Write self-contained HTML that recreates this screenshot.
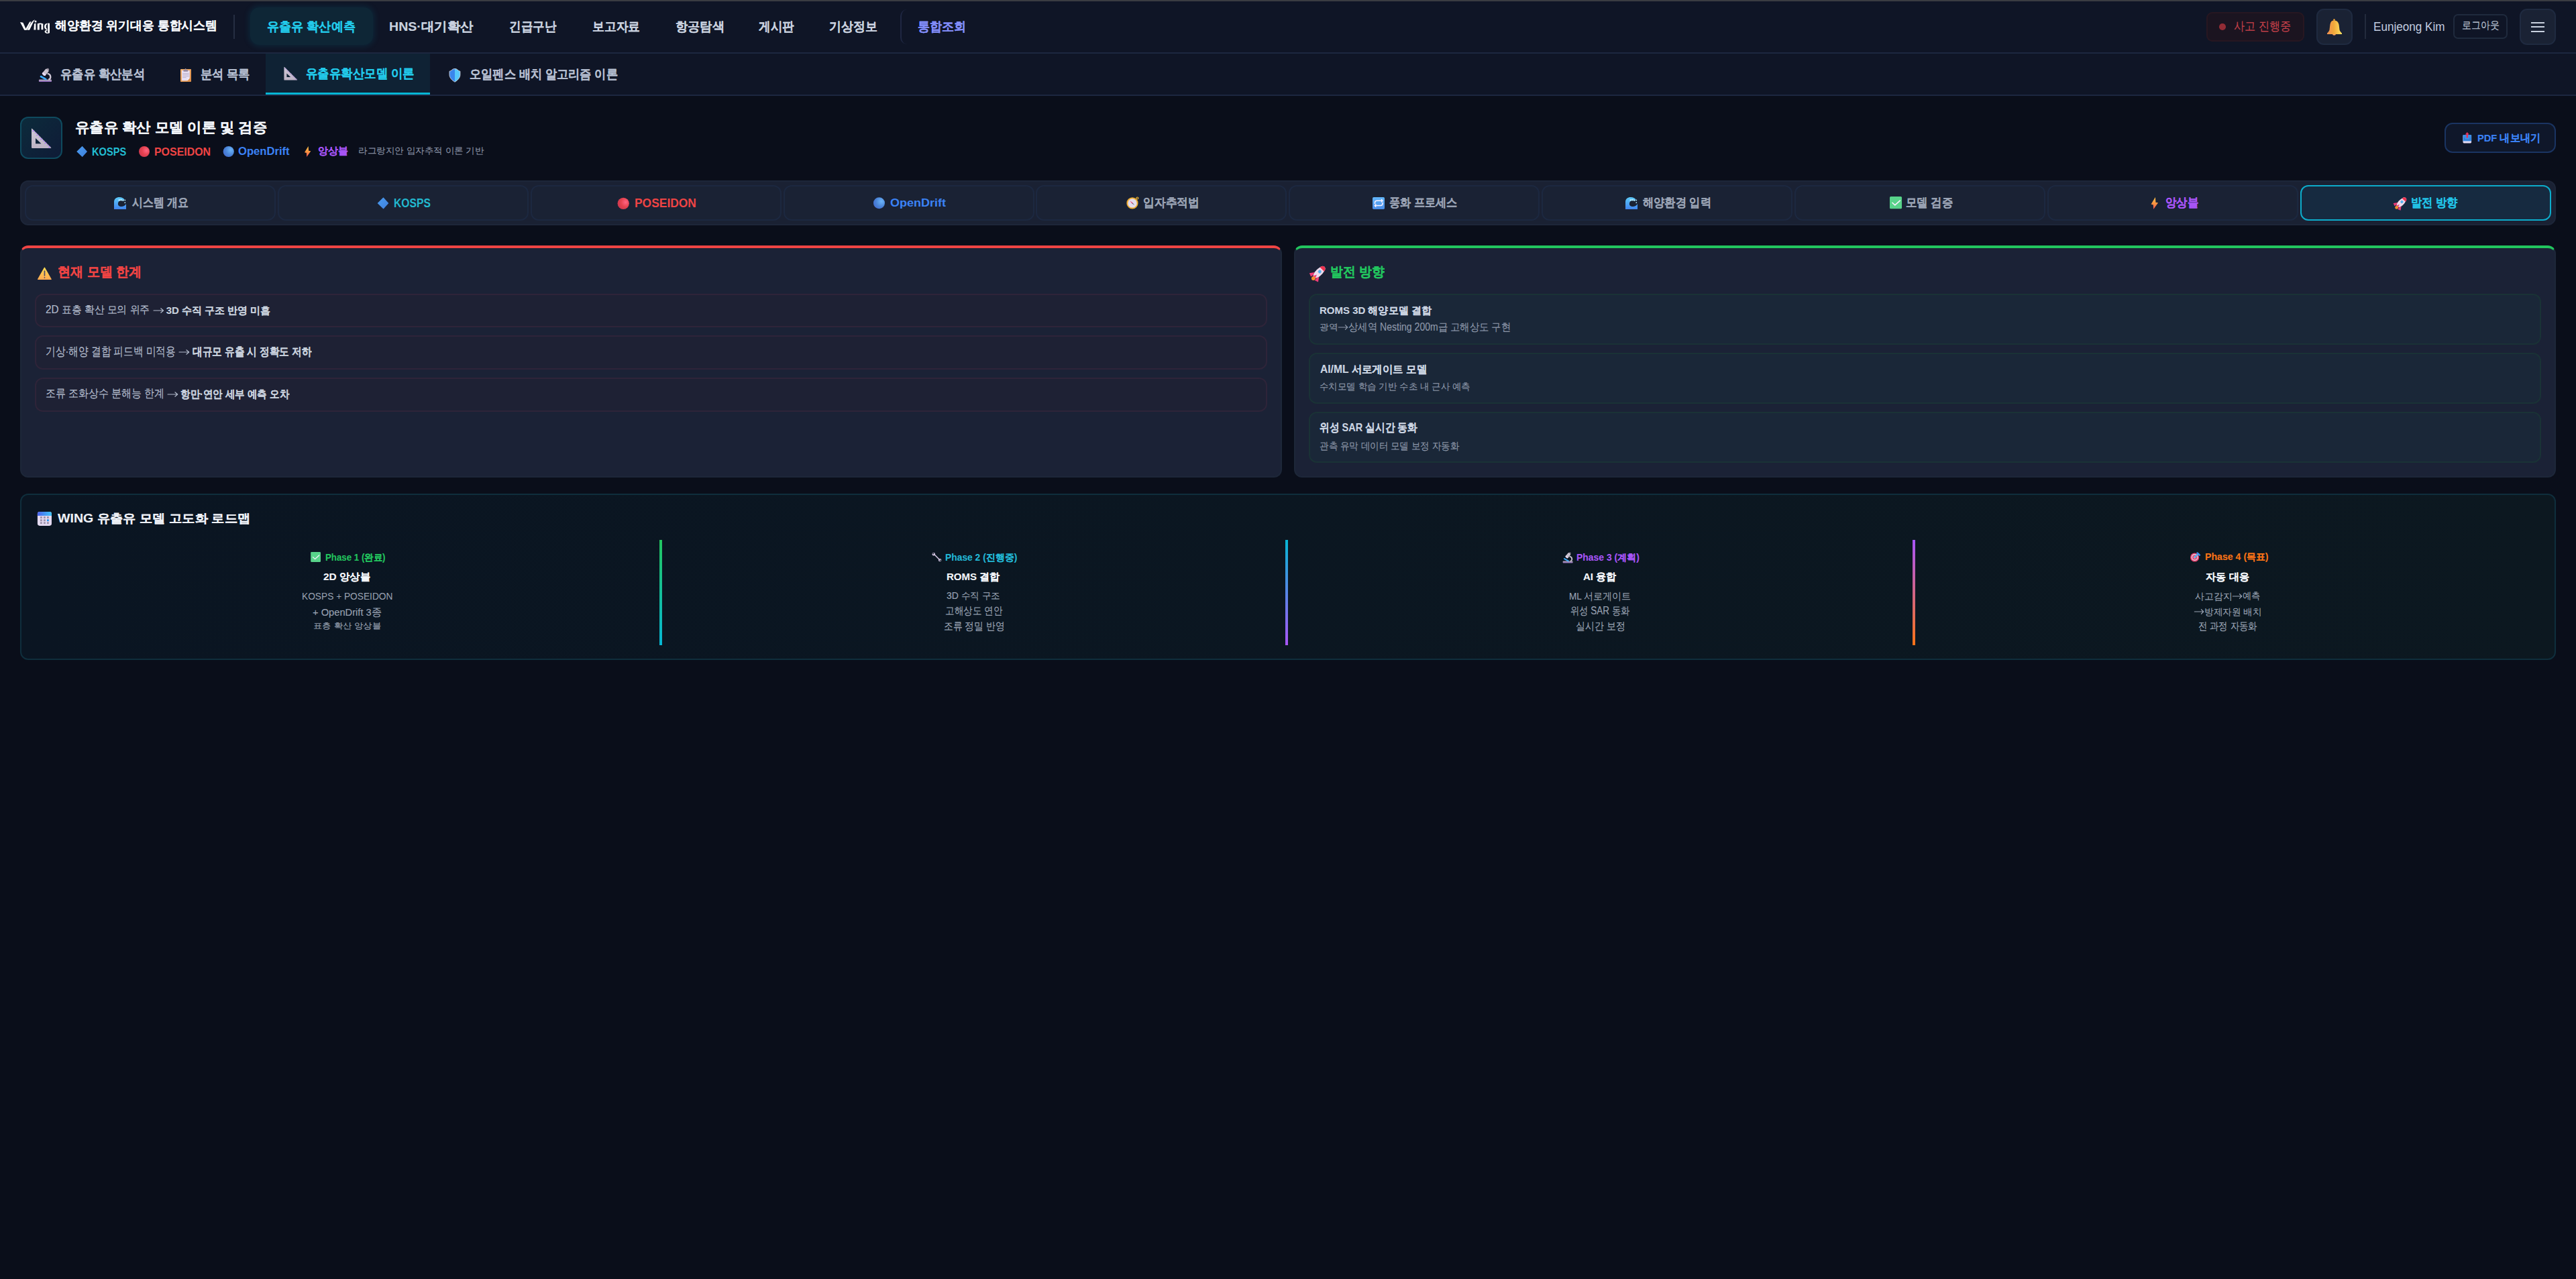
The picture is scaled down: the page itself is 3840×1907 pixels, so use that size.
<!DOCTYPE html><html lang="ko"><head><meta charset="utf-8"><style>*{box-sizing:border-box;margin:0;padding:0}html,body{width:3840px;height:1907px;overflow:hidden;background:#0a0e1a;font-family:"Liberation Sans",sans-serif}div{position:absolute}span{position:absolute;line-height:1;white-space:pre;transform-origin:0 0}</style></head><body>
<div style="left:0px;top:0px;width:3840px;height:80px;background:#0f1526"></div>
<div style="left:0px;top:0px;width:3840px;height:1.5px;background:#3a3c42"></div>
<div style="left:0px;top:78px;width:3840px;height:2px;background:#1c2740"></div>
<div style="left:348px;top:22px;width:2px;height:36px;background:#262e42"></div>
<div style="left:373px;top:11px;width:183px;height:56px;border-radius:14px;background:#0e2636;box-shadow:0 0 8px 2px rgba(8,120,150,0.18)"></div>
<div style="left:1342px;top:14px;width:40px;height:52px;border-left:2px solid #1f2742;border-radius:10px 0 0 10px"></div>
<div style="left:3289px;top:18px;width:146px;height:44px;border-radius:9px;background:#1b1420;border:2px solid #33192180"></div>
<div style="left:3308px;top:35px;width:9.5px;height:9.5px;border-radius:50%;background:#922c35"></div>
<div style="left:3453px;top:13px;width:54px;height:54px;border-radius:11px;background:#1a2234;border:2px solid #1f2a40"></div>
<div style="left:3525px;top:21px;width:2px;height:37px;background:#232b3d"></div>
<div style="left:3657px;top:21px;width:81px;height:37px;border-radius:7px;border:2px solid #1f2a3d"></div>
<div style="left:3756px;top:13px;width:54px;height:54px;border-radius:11px;background:#1a2234;border:2px solid #1f2a40"></div>
<div style="left:3773px;top:32.5px;width:20px;height:2px;background:#c9d1df"></div>
<div style="left:3773px;top:39px;width:20px;height:2px;background:#c9d1df"></div>
<div style="left:3773px;top:45.5px;width:20px;height:2px;background:#c9d1df"></div>
<div style="left:0px;top:80px;width:3840px;height:61px;background:#0f1526"></div>
<div style="left:0px;top:141px;width:3840px;height:2px;background:#1c2740"></div>
<div style="left:396px;top:80px;width:245px;height:61px;background:#0f2234"></div>
<div style="left:396px;top:137.5px;width:245px;height:3.5px;background:#06b6d4"></div>
<div style="left:30px;top:174px;width:63px;height:63px;border-radius:12px;border:2px solid #0f4a5e;background:linear-gradient(135deg,#0c2b3b,#0f1b37)"></div>
<div style="left:3644px;top:183px;width:166px;height:45px;border-radius:12px;border:2px solid #1a3462;background:#0f172a"></div>
<div style="left:30px;top:269px;width:3780px;height:67px;border-radius:12px;background:#1a2133;border:2px solid #1d2639"></div>
<div style="left:37.0px;top:276px;width:374px;height:53px;border-radius:12px;background:#1a2234;border:2px solid #1c2840"></div>
<div style="left:413.87px;top:276px;width:374px;height:53px;border-radius:12px;background:#1a2234;border:2px solid #1c2840"></div>
<div style="left:790.74px;top:276px;width:374px;height:53px;border-radius:12px;background:#1a2234;border:2px solid #1c2840"></div>
<div style="left:1167.6100000000001px;top:276px;width:374px;height:53px;border-radius:12px;background:#1a2234;border:2px solid #1c2840"></div>
<div style="left:1544.48px;top:276px;width:374px;height:53px;border-radius:12px;background:#1a2234;border:2px solid #1c2840"></div>
<div style="left:1921.35px;top:276px;width:374px;height:53px;border-radius:12px;background:#1a2234;border:2px solid #1c2840"></div>
<div style="left:2298.2200000000003px;top:276px;width:374px;height:53px;border-radius:12px;background:#1a2234;border:2px solid #1c2840"></div>
<div style="left:2675.09px;top:276px;width:374px;height:53px;border-radius:12px;background:#1a2234;border:2px solid #1c2840"></div>
<div style="left:3051.96px;top:276px;width:374px;height:53px;border-radius:12px;background:#1a2234;border:2px solid #1c2840"></div>
<div style="left:3429px;top:276px;width:374px;height:53px;border-radius:12px;background:#162a40;border:2px solid #0daccb"></div>
<div style="left:30px;top:366px;width:1880.5px;height:346px;border-radius:12px;background:#1b2236;border:2px solid #1d2739;border-top:4px solid #ef4444"></div>
<div style="left:1929px;top:366px;width:1881px;height:346px;border-radius:12px;background:#1b2236;border:2px solid #1d2739;border-top:4px solid #22c55e"></div>
<div style="left:52px;top:438px;width:1836.5px;height:50px;border-radius:12px;background:#1e2134;border:2px solid #2e2439"></div>
<div style="left:52px;top:500px;width:1836.5px;height:50.5px;border-radius:12px;background:#1e2134;border:2px solid #2e2439"></div>
<div style="left:52px;top:563px;width:1836.5px;height:50.5px;border-radius:12px;background:#1e2134;border:2px solid #2e2439"></div>
<div style="left:1951px;top:437.75px;width:1837px;height:76px;border-radius:12px;background:#1a2738;border:2px solid #1a3236"></div>
<div style="left:1951px;top:525.6px;width:1837px;height:76px;border-radius:12px;background:#1a2738;border:2px solid #1a3236"></div>
<div style="left:1951px;top:613.8px;width:1837px;height:76px;border-radius:12px;background:#1a2738;border:2px solid #1a3236"></div>
<div style="left:30px;top:736px;width:3780px;height:248px;border-radius:12px;border:2px solid #0f2e3c;background:linear-gradient(90deg,#0a1522,#0c1820)"></div>
<div style="left:982.5px;top:805px;width:4px;height:157px;background:linear-gradient(#22c55e,#06b6d4)"></div>
<div style="left:1916px;top:805px;width:4px;height:157px;background:linear-gradient(#06b6d4,#a855f7)"></div>
<div style="left:2851px;top:805px;width:4px;height:157px;background:linear-gradient(#a855f7,#f97316)"></div>
<svg style="position:absolute;left:26px;top:24px" width="56" height="32" viewBox="0 0 56 32"><g fill="#ffffff"><path d="M4,9 L8.4,9.8 L13.3,20.8 L10.2,20.8 Z"/><path d="M11.2,20.8 L18.2,8.6 L20.6,8.3 L14.2,20.8 Z"/><path d="M14.6,20.8 C17.5,15 20.5,7.5 26.2,5.2 C25.2,6.4 24.6,7.4 23.9,8.6 L18,20.8 Z"/><circle cx="27" cy="8.1" r="1.5"/><path d="M25,11.6 L27.4,10.6 L27.4,20.6 L24.4,20.6 Z"/><path d="M29.8,20.6 L29.8,11.2 Q34,9.6 38.3,11.4 L38.3,20.3 L35.5,20.3 L35.5,12.6 Q34,12 32.8,12.5 L32.8,20.6 Z"/><path d="M44.4,10.8 Q40,11.2 40,15.8 Q40,20 44.4,20.4 L44.4,19.2 Q42.6,18.6 42.6,15.8 Q42.6,12.6 44.4,12 Z"/><path d="M45.2,10.4 L48,10.8 L48,24.8 Q47.6,26 45.4,25.9 Z"/><path d="M43.8,20.6 Q40.2,21.4 40.6,23.6 Q41.4,26 45.2,25.9 L45.2,24.8 Q43.2,24.4 43,23.2 Q43,21.9 44.9,21.2 Z"/></g></svg>
<svg style="position:absolute;left:3464px;top:24px" width="32.0" height="32.0" viewBox="0 0 32 32"><defs><linearGradient id="bel" x1="0" y1="0" x2="1" y2="0"><stop offset="0" stop-color="#f08e52"/><stop offset="0.45" stop-color="#f0a83a"/><stop offset="1" stop-color="#ffe462"/></linearGradient></defs><circle cx="15.5" cy="5.6" r="1.3" fill="#f2a83a"/><path d="M13,26.8 A2.5,2 0 0 0 18,26.8 Z" fill="#f7a070"/><path d="M15.5,6.4 C19.6,6.4 22,9 22.6,13 L23.5,20.5 C24,22.6 25.6,24.1 27,25.6 L27,26.9 L5,26.9 L5,25.6 C6.4,24.1 8,22.6 8.5,20.5 L9.4,13 C10,9 11.4,6.4 15.5,6.4 Z" fill="url(#bel)"/></svg>
<svg style="position:absolute;left:52px;top:96px" width="32" height="32" viewBox="0 0 32 32"><rect x="5.9" y="22.4" width="19.1" height="3.5" rx="1.3" fill="#a999b7"/><rect x="6.2" y="24.9" width="18.5" height="1" fill="#8e62c2"/>
<path d="M18.6,13.6 Q23.6,14.6 23.3,19.4 Q23.1,22 20.3,22.6" fill="none" stroke="#d2cad8" stroke-width="2.3"/>
<line x1="8.9" y1="18" x2="16.3" y2="22.2" stroke="#3ba9f8" stroke-width="2.6" stroke-linecap="round"/>
<g transform="rotate(40 15.8 11.6)"><rect x="13" y="6.2" width="5.8" height="11" rx="2.2" fill="#c9c2cf"/><rect x="13" y="14.2" width="5.8" height="2.2" fill="#eadcf8"/><rect x="14.3" y="4.6" width="3.2" height="2.4" rx="1" fill="#9c92a2"/></g></svg>
<svg style="position:absolute;left:261px;top:96px" width="32.0" height="32.0" viewBox="0 0 32 32"><defs><linearGradient id="clg" x1="0" y1="0" x2="1" y2="1"><stop offset="0" stop-color="#f4b26e"/><stop offset="1" stop-color="#d98a46"/></linearGradient></defs><rect x="8" y="7" width="16" height="19" rx="0.8" fill="url(#clg)"/><path d="M10,9 L21.8,9 L21.8,20.5 L18.3,24.2 L10,24.2 Z" fill="#e6def2"/><path d="M18.3,24.2 L21.8,20.5 L18.6,20.8 Z" fill="#f2eefa"/><rect x="12.3" y="8" width="7" height="2.8" rx="1" fill="#988aa0"/><circle cx="15.6" cy="7" r="0.9" fill="#988aa0"/><g fill="#b9afc8"><rect x="11.2" y="13" width="9.5" height="0.9"/><rect x="11.2" y="15" width="9.5" height="0.9"/><rect x="11.2" y="17" width="9.5" height="0.9"/><rect x="11.2" y="19" width="5.5" height="0.9"/></g></svg>
<svg style="position:absolute;left:412.3px;top:88.4px" width="43" height="43" viewBox="0 0 64 64"><defs><linearGradient id="ssg" x1="0" y1="0" x2="0" y2="1"><stop offset="0" stop-color="#cfc9d6"/><stop offset="1" stop-color="#bdb4c5"/></linearGradient></defs>
<path fill="url(#ssg)" fill-rule="evenodd" d="M17,18.3 Q17,16.9 18,17.9 L46,45.9 Q47,47 45.6,47 L18.3,47 Q17,47 17,45.7 Z M23,32 L23,40.3 L31.5,40.3 Z"/>
<g stroke="#a36ff2" stroke-width="1.3" stroke-linecap="round">
<path d="M20.3,20.5 L18.9,21.9"/><path d="M23.2,23.6 L22.4,24.4"/><path d="M26.3,26.5 L24.9,27.9"/><path d="M29.2,29.6 L28.4,30.4"/><path d="M32.3,32.5 L30.9,33.9"/><path d="M35.2,35.6 L34.4,36.4"/><path d="M38.3,38.5 L36.9,39.9"/><path d="M41.2,41.6 L40.4,42.4"/><path d="M44.3,44.5 L42.9,45.9"/></g></svg>
<svg style="position:absolute;left:640px;top:90px" width="80" height="40" viewBox="0 0 80 40"><path fill="#3a86ec" d="M30,16.3 C32,15.8 34,14.2 35,13.2 C36.5,12.4 37.2,12.2 38,12.2 L38,32.2 C34,30 30,26 30,21.5 Z"/><path fill="#56c7fb" d="M38,12.2 C38.8,12.2 39.5,12.4 41,13.2 C42,14.2 44,15.8 45.9,16.3 L45.9,21.5 C45.9,26 42,30 38,32.2 Z"/><path fill="none" stroke="#cfd3de" stroke-width="0.9" d="M30,16.3 C32,15.8 34,14.2 35,13.2 C36.5,12.4 39.5,12.4 41,13.2 C42,14.2 44,15.8 45.9,16.3 L45.9,21.5 C45.9,26 42,30 38,32.2 C34,30 30,26 30,21.5 Z"/></svg>
<svg style="position:absolute;left:30px;top:174px" width="64" height="64" viewBox="0 0 64 64"><defs><linearGradient id="ssg" x1="0" y1="0" x2="0" y2="1"><stop offset="0" stop-color="#cfc9d6"/><stop offset="1" stop-color="#bdb4c5"/></linearGradient></defs>
<path fill="url(#ssg)" fill-rule="evenodd" d="M17,18.3 Q17,16.9 18,17.9 L46,45.9 Q47,47 45.6,47 L18.3,47 Q17,47 17,45.7 Z M23,32 L23,40.3 L31.5,40.3 Z"/>
<g stroke="#a36ff2" stroke-width="1.3" stroke-linecap="round">
<path d="M20.3,20.5 L18.9,21.9"/><path d="M23.2,23.6 L22.4,24.4"/><path d="M26.3,26.5 L24.9,27.9"/><path d="M29.2,29.6 L28.4,30.4"/><path d="M32.3,32.5 L30.9,33.9"/><path d="M35.2,35.6 L34.4,36.4"/><path d="M38.3,38.5 L36.9,39.9"/><path d="M41.2,41.6 L40.4,42.4"/><path d="M44.3,44.5 L42.9,45.9"/></g></svg>
<svg style="position:absolute;left:108px;top:210px" width="32.0" height="32.0" viewBox="0 0 32 32"><defs><linearGradient id="dmg" x1="0" y1="0" x2="1" y2="1"><stop offset="0" stop-color="#4a9cf0"/><stop offset="1" stop-color="#3f7fdc"/></linearGradient></defs><path d="M14.4,8.1 Q14.7,7.9 15,8.2 L21.8,15.7 Q22,16 21.8,16.3 L15,23.8 Q14.7,24.1 14.4,23.8 L6.5,16.3 Q6.2,16 6.5,15.7 Z" fill="url(#dmg)"/></svg>
<svg style="position:absolute;left:200px;top:210px" width="32.0" height="32.0" viewBox="0 0 32 32"><defs><radialGradient id="rdg" cx="0.7" cy="0.4" r="0.8"><stop offset="0" stop-color="#ff6482"/><stop offset="0.5" stop-color="#e5424f"/><stop offset="1" stop-color="#c9354f"/></radialGradient></defs><circle cx="15" cy="16" r="8" fill="url(#rdg)"/></svg>
<svg style="position:absolute;left:326px;top:210px" width="32.0" height="32.0" viewBox="0 0 32 32"><defs><radialGradient id="blg" cx="0.7" cy="0.35" r="0.85"><stop offset="0" stop-color="#6cb4f8"/><stop offset="0.55" stop-color="#4a84d8"/><stop offset="1" stop-color="#4468d0"/></radialGradient></defs><circle cx="14.75" cy="16" r="8.1" fill="url(#blg)"/></svg>
<svg style="position:absolute;left:442px;top:210px" width="32.0" height="32.0" viewBox="0 0 32 32"><defs><linearGradient id="btg" x1="0" y1="0" x2="0" y2="1"><stop offset="0" stop-color="#ffc548"/><stop offset="0.55" stop-color="#f89040"/><stop offset="1" stop-color="#f04e5a"/></linearGradient></defs><path d="M17.6,8 L12,17.3 L14.9,18.1 L15.2,24 L21.3,15.3 L18.1,14.8 Z" fill="url(#btg)"/></svg>
<svg style="position:absolute;left:3670px;top:196px" width="16" height="18" viewBox="0 0 16 18"><rect x="1.5" y="5" width="12.6" height="12.4" rx="1.4" fill="#e6daf2"/><rect x="1.5" y="5" width="12.6" height="9.6" rx="1.2" fill="#3a8ee6"/><path d="M3.6,9.2 L3.6,12.6 L12,12.6 L12,9.2" fill="none" stroke="#2b70c8" stroke-width="0.9"/><path d="M7.8,1 L10.8,4.4 L9,4.4 L9,9.4 L6.6,9.4 L6.6,4.4 L4.8,4.4 Z" fill="#e5345c"/></svg>
<svg style="position:absolute;left:163px;top:287px" width="32" height="32" viewBox="0 0 32 32"><defs><linearGradient id="wvg" x1="0" y1="0" x2="0" y2="1"><stop offset="0" stop-color="#5ccaf9"/><stop offset="1" stop-color="#4185ee"/></linearGradient></defs><path d="M7,25 L7,14 C7,9.3 10.6,6.9 15,6.9 C18.6,6.9 21,8.2 22.5,10.3 L21.2,12 C20.2,11.6 19,11.5 18,11.5 C15,11.5 12.9,14 12.9,17 C12.9,19.6 15.3,21.1 18,21.1 C21,21.1 23.4,19.6 25,17 L25,25 Z" fill="url(#wvg)"/><g fill="#aee8ff"><circle cx="14.8" cy="11.4" r="1.4"/><circle cx="17.6" cy="11.2" r="1.4"/><circle cx="20.4" cy="11.7" r="1.2"/><circle cx="23.3" cy="11.5" r="0.9"/><circle cx="23.3" cy="15.2" r="0.9"/></g></svg>
<svg style="position:absolute;left:556px;top:285.5px" width="33.92" height="33.92" viewBox="0 0 32 32"><defs><linearGradient id="dmg" x1="0" y1="0" x2="1" y2="1"><stop offset="0" stop-color="#4a9cf0"/><stop offset="1" stop-color="#3f7fdc"/></linearGradient></defs><path d="M14.4,8.1 Q14.7,7.9 15,8.2 L21.8,15.7 Q22,16 21.8,16.3 L15,23.8 Q14.7,24.1 14.4,23.8 L6.5,16.3 Q6.2,16 6.5,15.7 Z" fill="url(#dmg)"/></svg>
<svg style="position:absolute;left:913.45px;top:285.7px" width="34.56" height="34.56" viewBox="0 0 32 32"><defs><radialGradient id="rdg" cx="0.7" cy="0.4" r="0.8"><stop offset="0" stop-color="#ff6482"/><stop offset="0.5" stop-color="#e5424f"/><stop offset="1" stop-color="#c9354f"/></radialGradient></defs><circle cx="15" cy="16" r="8" fill="url(#rdg)"/></svg>
<svg style="position:absolute;left:1295.0px;top:286.2px" width="33.6" height="33.6" viewBox="0 0 32 32"><defs><radialGradient id="blg" cx="0.7" cy="0.35" r="0.85"><stop offset="0" stop-color="#6cb4f8"/><stop offset="0.55" stop-color="#4a84d8"/><stop offset="1" stop-color="#4468d0"/></radialGradient></defs><circle cx="14.75" cy="16" r="8.1" fill="url(#blg)"/></svg>
<svg style="position:absolute;left:1672px;top:287px" width="32" height="32" viewBox="0 0 32 32"><circle cx="16" cy="15.9" r="8.6" fill="#efad32"/><circle cx="16" cy="15.9" r="6.7" fill="#e3dcee"/><circle cx="23.4" cy="8.5" r="1.5" fill="none" stroke="#f2b630" stroke-width="1.2"/><path d="M12.3,12.2 L16.6,15.4 L15.4,16.6 Z" fill="#e8356a"/><path d="M16.6,15.4 L19.3,18.9 L15.4,16.6 Z" fill="#6e6a74"/></svg>
<svg style="position:absolute;left:2039px;top:287px" width="32" height="32" viewBox="0 0 32 32"><defs><linearGradient id="rpg" x1="0" y1="0" x2="0" y2="1"><stop offset="0" stop-color="#62b6fa"/><stop offset="1" stop-color="#4a8ce6"/></linearGradient></defs><rect x="7" y="7" width="18" height="18" rx="1.8" fill="url(#rpg)"/><g fill="none" stroke="#fbf2ff" stroke-width="1.5" stroke-linecap="round" stroke-linejoin="round"><path d="M10.5,16.6 L10.5,15.2 Q10.5,12.3 13.6,12.3 L21.6,12.3"/><path d="M20.4,10.6 L22,12.3 L20.4,14"/><path d="M21.9,15.6 L21.9,16.8 Q21.9,19.6 18.8,19.6 L10.6,19.6"/><path d="M11.9,17.9 L10.3,19.6 L11.9,21.3"/></g></svg>
<svg style="position:absolute;left:2415.6px;top:287px" width="32" height="32" viewBox="0 0 32 32"><defs><linearGradient id="wvg" x1="0" y1="0" x2="0" y2="1"><stop offset="0" stop-color="#5ccaf9"/><stop offset="1" stop-color="#4185ee"/></linearGradient></defs><path d="M7,25 L7,14 C7,9.3 10.6,6.9 15,6.9 C18.6,6.9 21,8.2 22.5,10.3 L21.2,12 C20.2,11.6 19,11.5 18,11.5 C15,11.5 12.9,14 12.9,17 C12.9,19.6 15.3,21.1 18,21.1 C21,21.1 23.4,19.6 25,17 L25,25 Z" fill="url(#wvg)"/><g fill="#aee8ff"><circle cx="14.8" cy="11.4" r="1.4"/><circle cx="17.6" cy="11.2" r="1.4"/><circle cx="20.4" cy="11.7" r="1.2"/><circle cx="23.3" cy="11.5" r="0.9"/><circle cx="23.3" cy="15.2" r="0.9"/></g></svg>
<svg style="position:absolute;left:2806.7px;top:282px" width="39.04" height="39.04" viewBox="0 0 32 32"><rect x="8.2" y="9" width="14.8" height="15" rx="1.3" fill="#58d38a"/><path d="M11.4,16.6 L14.6,19.6 L20.7,14" fill="none" stroke="#faf2ff" stroke-width="1.25" stroke-linecap="round" stroke-linejoin="round"/></svg>
<svg style="position:absolute;left:3193.4px;top:284.6px" width="36.16" height="36.16" viewBox="0 0 32 32"><defs><linearGradient id="btg" x1="0" y1="0" x2="0" y2="1"><stop offset="0" stop-color="#ffc548"/><stop offset="0.55" stop-color="#f89040"/><stop offset="1" stop-color="#f04e5a"/></linearGradient></defs><path d="M17.6,8 L12,17.3 L14.9,18.1 L15.2,24 L21.3,15.3 L18.1,14.8 Z" fill="url(#btg)"/></svg>
<svg style="position:absolute;left:3562px;top:287px" width="32" height="32" viewBox="0 0 32 32"><g transform="rotate(-45 18 14.5)"><path d="M8,14.5 C9.5,10.6 14.5,10 19.5,10.3 L24.4,11.3 C27.8,12.3 27.8,16.7 24.4,17.7 L19.5,18.7 C14.5,19 9.5,18.4 8,14.5 Z" fill="#eedced"/><path d="M22.6,10.8 L24.4,11.3 C27.8,12.3 27.8,16.7 24.4,17.7 L22.6,18.2 Z" fill="#ee3350"/><circle cx="18.6" cy="14.5" r="2.1" fill="#4ab3f7" stroke="#c9b6cf" stroke-width="0.5"/><path d="M13.5,10.6 L8.2,6.8 L6.6,11.2 L10.4,11.6 Z" fill="#f03c78"/><path d="M13.5,18.4 L8.2,22.2 L6.6,17.8 L10.4,17.4 Z" fill="#f03c78"/><path d="M8.4,12 L13.5,14.5 L8.4,17 Z" fill="#f04a80"/></g><circle cx="10.6" cy="22.4" r="2.4" fill="#f88e2a"/></svg>
<svg style="position:absolute;left:50px;top:392px" width="32.0" height="32.0" viewBox="0 0 32 32"><defs><linearGradient id="wng" x1="0" y1="0" x2="0" y2="1"><stop offset="0" stop-color="#ffdf52"/><stop offset="1" stop-color="#ffa852"/></linearGradient></defs><path d="M15.8,7 Q16.4,6 17,7 L26.7,24 Q27.2,24.9 26.2,24.9 L6.6,24.9 Q5.6,24.9 6.1,24 Z" fill="url(#wng)"/><rect x="15.6" y="11.3" width="1.7" height="8.4" rx="0.85" fill="#4e4c6a"/><circle cx="16.45" cy="22" r="0.9" fill="#4e4c6a"/></svg>
<svg style="position:absolute;left:227px;top:457.9px" width="17.75" height="10" viewBox="0 0 17.75 10"><path d="M2,5 L16.55,5 M12.75,1.8 L16.55,5 L12.75,8.2" fill="none" stroke="#b3bccd" stroke-width="1.15" stroke-linecap="round" stroke-linejoin="round"/></svg>
<svg style="position:absolute;left:265.2px;top:519.7px" width="17.900000000000034" height="10" viewBox="0 0 17.900000000000034 10"><path d="M2,5 L16.700000000000035,5 M12.900000000000034,1.8 L16.700000000000035,5 L12.900000000000034,8.2" fill="none" stroke="#b3bccd" stroke-width="1.15" stroke-linecap="round" stroke-linejoin="round"/></svg>
<svg style="position:absolute;left:248px;top:582.7px" width="17.899999999999977" height="10" viewBox="0 0 17.899999999999977 10"><path d="M2,5 L16.699999999999978,5 M12.899999999999977,1.8 L16.699999999999978,5 L12.899999999999977,8.2" fill="none" stroke="#b3bccd" stroke-width="1.15" stroke-linecap="round" stroke-linejoin="round"/></svg>
<svg style="position:absolute;left:1944.5px;top:388.1px" width="38.72" height="38.72" viewBox="0 0 32 32"><g transform="rotate(-45 18 14.5)"><path d="M8,14.5 C9.5,10.6 14.5,10 19.5,10.3 L24.4,11.3 C27.8,12.3 27.8,16.7 24.4,17.7 L19.5,18.7 C14.5,19 9.5,18.4 8,14.5 Z" fill="#eedced"/><path d="M22.6,10.8 L24.4,11.3 C27.8,12.3 27.8,16.7 24.4,17.7 L22.6,18.2 Z" fill="#ee3350"/><circle cx="18.6" cy="14.5" r="2.1" fill="#4ab3f7" stroke="#c9b6cf" stroke-width="0.5"/><path d="M13.5,10.6 L8.2,6.8 L6.6,11.2 L10.4,11.6 Z" fill="#f03c78"/><path d="M13.5,18.4 L8.2,22.2 L6.6,17.8 L10.4,17.4 Z" fill="#f03c78"/><path d="M8.4,12 L13.5,14.5 L8.4,17 Z" fill="#f04a80"/></g><circle cx="10.6" cy="22.4" r="2.4" fill="#f88e2a"/></svg>
<svg style="position:absolute;left:1993.9px;top:483.4px" width="16.0" height="10" viewBox="0 0 16.0 10"><path d="M1.3,5 L14.7,5 M11.4,1.6 L14.7,5 L11.4,8.4" fill="none" stroke="#8d97a9" stroke-width="1.15" stroke-linecap="round" stroke-linejoin="round"/></svg>
<svg style="position:absolute;left:50px;top:758px" width="32" height="32" viewBox="0 0 32 32"><defs><linearGradient id="calg" x1="0" x2="1"><stop offset="0" stop-color="#4b62ee"/><stop offset="1" stop-color="#3fc6f8"/></linearGradient></defs><rect x="5.9" y="4.9" width="21.1" height="21" rx="3.3" fill="#e3d9f0"/><path fill="url(#calg)" d="M5.9,11 L5.9,8.2 Q5.9,4.9 9.2,4.9 L23.7,4.9 Q27,4.9 27,8.2 L27,11 Z"/><g fill="#9c92aa"><rect x="10" y="12.1" width="2.8" height="2.8"/><rect x="15" y="12.1" width="2.8" height="2.8"/><rect x="20" y="12.1" width="2.8" height="2.8"/><rect x="10" y="16.35" width="2.8" height="2.8"/><rect x="15" y="16.35" width="2.8" height="2.8"/><rect x="10" y="20.35" width="2.8" height="2.8"/><rect x="15" y="20.35" width="2.8" height="2.8"/><rect x="20" y="20.35" width="2.8" height="2.8"/></g><rect x="20" y="16.35" width="2.8" height="2.8" fill="#2393f2"/></svg>
<svg style="position:absolute;left:455px;top:814px" width="32" height="32" viewBox="0 0 32 32"><rect x="8.2" y="9" width="14.8" height="15" rx="1.3" fill="#58d38a"/><path d="M11.4,16.6 L14.6,19.6 L20.7,14" fill="none" stroke="#faf2ff" stroke-width="1.25" stroke-linecap="round" stroke-linejoin="round"/></svg>
<svg style="position:absolute;left:1380px;top:814px" width="32" height="32" viewBox="0 0 32 32"><g fill="#dccdea"><path d="M12.6,13.6 L13.6,12.6 L21,20 L20,21 Z"/><circle cx="11.8" cy="12.2" r="2.2"/><circle cx="21.1" cy="21.1" r="2.2"/></g><circle cx="11.4" cy="11.4" r="1" fill="#0b1421"/><circle cx="21.6" cy="21.6" r="1" fill="#0b1421"/></svg>
<svg style="position:absolute;left:2325.4px;top:819.2px" width="25.1" height="25.1" viewBox="0 0 32 32"><rect x="5.9" y="22.4" width="19.1" height="3.5" rx="1.3" fill="#a999b7"/><rect x="6.2" y="24.9" width="18.5" height="1" fill="#8e62c2"/>
<path d="M18.6,13.6 Q23.6,14.6 23.3,19.4 Q23.1,22 20.3,22.6" fill="none" stroke="#d2cad8" stroke-width="2.3"/>
<line x1="8.9" y1="18" x2="16.3" y2="22.2" stroke="#3ba9f8" stroke-width="2.6" stroke-linecap="round"/>
<g transform="rotate(40 15.8 11.6)"><rect x="13" y="6.2" width="5.8" height="11" rx="2.2" fill="#c9c2cf"/><rect x="13" y="14.2" width="5.8" height="2.2" fill="#eadcf8"/><rect x="14.3" y="4.6" width="3.2" height="2.4" rx="1" fill="#9c92a2"/></g></svg>
<svg style="position:absolute;left:3256px;top:814px" width="32" height="32" viewBox="0 0 32 32"><circle cx="15.6" cy="17" r="6.6" fill="#e9426c"/><circle cx="15.6" cy="17" r="4.9" fill="#d9d0e6"/><circle cx="15.6" cy="17" r="3.5" fill="#e9426c"/><circle cx="15.6" cy="17" r="1.7" fill="#d9d0e6"/><path d="M15.6,17 L21,11.6" stroke="#4ab0f2" stroke-width="2.2" stroke-linecap="round"/><circle cx="19.6" cy="10.6" r="1.3" fill="#3a86e8"/><circle cx="22.8" cy="13.6" r="1.3" fill="#3a86e8"/><circle cx="21.6" cy="12.4" r="1.3" fill="#3f9aee"/></svg>
<svg style="position:absolute;left:3326.5px;top:884.3px" width="16.0" height="10" viewBox="0 0 16.0 10"><path d="M1.3,5 L14.7,5 M11.4,1.6 L14.7,5 L11.4,8.4" fill="none" stroke="#9aa3b3" stroke-width="1.15" stroke-linecap="round" stroke-linejoin="round"/></svg>
<svg style="position:absolute;left:3269.7px;top:907.3px" width="16.0" height="10" viewBox="0 0 16.0 10"><path d="M1.3,5 L14.7,5 M11.4,1.6 L14.7,5 L11.4,8.4" fill="none" stroke="#9aa3b3" stroke-width="1.15" stroke-linecap="round" stroke-linejoin="round"/></svg>
<span style="left:81.64px;top:29.47px;font-size:18.14px;font-weight:700;color:#f4f6fa;font-family:'Liberation Sans',sans-serif;transform:scaleX(0.9911);-webkit-text-stroke:0.109px currentColor;">해양환경 위기대응 통합시스템</span>
<span style="left:397.90px;top:30.81px;font-size:18.80px;font-weight:700;color:#22caea;font-family:'Liberation Sans',sans-serif;transform:scaleX(0.9540);-webkit-text-stroke:0.113px currentColor;">유출유 확산예측</span>
<span style="left:579.82px;top:30.38px;font-size:19.20px;font-weight:700;color:#c9d1df;font-family:'Liberation Sans',sans-serif;transform:scaleX(1.0198);-webkit-text-stroke:0.115px currentColor;">HNS·대기확산</span>
<span style="left:758.92px;top:30.38px;font-size:19.20px;font-weight:700;color:#c9d1df;font-family:'Liberation Sans',sans-serif;transform:scaleX(0.9212);-webkit-text-stroke:0.115px currentColor;">긴급구난</span>
<span style="left:882.90px;top:30.37px;font-size:19.41px;font-weight:700;color:#c9d1df;font-family:'Liberation Sans',sans-serif;transform:scaleX(0.9360);-webkit-text-stroke:0.116px currentColor;">보고자료</span>
<span style="left:1006.88px;top:30.38px;font-size:19.20px;font-weight:700;color:#c9d1df;font-family:'Liberation Sans',sans-serif;transform:scaleX(0.9604);-webkit-text-stroke:0.115px currentColor;">항공탐색</span>
<span style="left:1130.82px;top:30.37px;font-size:19.41px;font-weight:700;color:#c9d1df;font-family:'Liberation Sans',sans-serif;transform:scaleX(0.9221);-webkit-text-stroke:0.116px currentColor;">게시판</span>
<span style="left:1236.27px;top:30.37px;font-size:19.41px;font-weight:700;color:#c9d1df;font-family:'Liberation Sans',sans-serif;transform:scaleX(0.9436);-webkit-text-stroke:0.116px currentColor;">기상정보</span>
<span style="left:1367.88px;top:30.38px;font-size:19.20px;font-weight:700;color:#818cf8;font-family:'Liberation Sans',sans-serif;transform:scaleX(0.9503);-webkit-text-stroke:0.115px currentColor;">통합조회</span>
<span style="left:3330.34px;top:31.17px;font-size:17.79px;font-weight:400;color:#c6414a;font-family:'Liberation Sans',sans-serif;transform:scaleX(0.8968);-webkit-text-stroke:0.142px currentColor;">사고 진행중</span>
<span style="left:3537.61px;top:29.77px;font-size:19.16px;font-weight:400;color:#c3cde0;font-family:'Liberation Sans',sans-serif;transform:scaleX(0.8935);">Eunjeong Kim</span>
<span style="left:3670.00px;top:29.31px;font-size:16.15px;font-weight:400;color:#b9c2d2;font-family:'Liberation Sans',sans-serif;transform:scaleX(0.8741);-webkit-text-stroke:0.129px currentColor;">로그아웃</span>
<span style="left:89.95px;top:100.80px;font-size:19.30px;font-weight:700;color:#b4bdcf;font-family:'Liberation Sans',sans-serif;transform:scaleX(0.9093);-webkit-text-stroke:0.116px currentColor;">유출유 확산분석</span>
<span style="left:298.94px;top:101.38px;font-size:19.20px;font-weight:700;color:#b4bdcf;font-family:'Liberation Sans',sans-serif;transform:scaleX(0.9055);-webkit-text-stroke:0.115px currentColor;">분석 목록</span>
<span style="left:455.95px;top:100.81px;font-size:18.80px;font-weight:700;color:#22caea;font-family:'Liberation Sans',sans-serif;transform:scaleX(0.9179);-webkit-text-stroke:0.113px currentColor;">유출유확산모델 이론</span>
<span style="left:699.96px;top:101.38px;font-size:19.20px;font-weight:700;color:#b4bdcf;font-family:'Liberation Sans',sans-serif;transform:scaleX(0.9053);-webkit-text-stroke:0.115px currentColor;">오일펜스 배치 알고리즘 이론</span>
<span style="left:111.71px;top:178.69px;font-size:21.16px;font-weight:700;color:#f1f4f9;font-family:'Liberation Sans',sans-serif;transform:scaleX(1.0164);-webkit-text-stroke:0.190px currentColor;">유출유 확산 모델 이론 및 검증</span>
<span style="left:137.10px;top:217.52px;font-size:16.20px;font-weight:700;color:#22bdd2;font-family:'Liberation Sans',sans-serif;transform:scaleX(0.9045);">KOSPS</span>
<span style="left:230.03px;top:217.52px;font-size:16.20px;font-weight:700;color:#ef4444;font-family:'Liberation Sans',sans-serif;transform:scaleX(0.9840);">POSEIDON</span>
<span style="left:355.32px;top:218.15px;font-size:15.98px;font-weight:700;color:#3b82f6;font-family:'Liberation Sans',sans-serif;transform:scaleX(1.0401);">OpenDrift</span>
<span style="left:473.91px;top:218.33px;font-size:14.72px;font-weight:700;color:#a855f7;font-family:'Liberation Sans',sans-serif;transform:scaleX(0.9973);-webkit-text-stroke:0.088px currentColor;">앙상블</span>
<span style="left:533.57px;top:218.80px;font-size:12.66px;font-weight:400;color:#8a93a6;font-family:'Liberation Sans',sans-serif;transform:scaleX(1.0452);-webkit-text-stroke:0.101px currentColor;">라그랑지안 입자추적 이론 기반</span>
<span style="left:3693.08px;top:198.09px;font-size:15.53px;font-weight:700;color:#3b82f6;font-family:'Liberation Sans',sans-serif;transform:scaleX(0.9447);-webkit-text-stroke:0.093px currentColor;">PDF 내보내기</span>
<span style="left:196.84px;top:292.55px;font-size:18.09px;font-weight:700;color:#9aa3b4;font-family:'Liberation Sans',sans-serif;transform:scaleX(0.8813);-webkit-text-stroke:0.109px currentColor;">시스템 개요</span>
<span style="left:587.03px;top:295.31px;font-size:17.61px;font-weight:700;color:#22b8cf;font-family:'Liberation Sans',sans-serif;transform:scaleX(0.8924);">KOSPS</span>
<span style="left:945.94px;top:295.31px;font-size:17.61px;font-weight:700;color:#ef4444;font-family:'Liberation Sans',sans-serif;transform:scaleX(0.9888);">POSEIDON</span>
<span style="left:1327.27px;top:293.89px;font-size:17.04px;font-weight:700;color:#3b82f6;font-family:'Liberation Sans',sans-serif;transform:scaleX(1.0577);">OpenDrift</span>
<span style="left:1703.80px;top:292.55px;font-size:18.09px;font-weight:700;color:#9aa3b4;font-family:'Liberation Sans',sans-serif;transform:scaleX(0.9335);-webkit-text-stroke:0.109px currentColor;">입자추적법</span>
<span style="left:2071.01px;top:292.55px;font-size:18.09px;font-weight:700;color:#9aa3b4;font-family:'Liberation Sans',sans-serif;transform:scaleX(0.8963);-webkit-text-stroke:0.109px currentColor;">풍화 프로세스</span>
<span style="left:2449.47px;top:292.55px;font-size:18.09px;font-weight:700;color:#9aa3b4;font-family:'Liberation Sans',sans-serif;transform:scaleX(0.9005);-webkit-text-stroke:0.109px currentColor;">해양환경 입력</span>
<span style="left:2841.39px;top:292.55px;font-size:18.09px;font-weight:700;color:#9aa3b4;font-family:'Liberation Sans',sans-serif;transform:scaleX(0.9125);-webkit-text-stroke:0.109px currentColor;">모델 검증</span>
<span style="left:3227.80px;top:292.54px;font-size:18.28px;font-weight:700;color:#a855f7;font-family:'Liberation Sans',sans-serif;transform:scaleX(0.9161);-webkit-text-stroke:0.110px currentColor;">앙상블</span>
<span style="left:3593.51px;top:292.54px;font-size:18.28px;font-weight:700;color:#22c3e6;font-family:'Liberation Sans',sans-serif;transform:scaleX(0.9030);-webkit-text-stroke:0.110px currentColor;">발전 방향</span>
<span style="left:85.84px;top:395.28px;font-size:20.48px;font-weight:700;color:#ef4444;font-family:'Liberation Sans',sans-serif;transform:scaleX(0.9528);-webkit-text-stroke:0.184px currentColor;">현재 모델 한계</span>
<span style="left:68.24px;top:453.35px;font-size:16.48px;font-weight:400;color:#b3bccd;font-family:'Liberation Sans',sans-serif;transform:scaleX(0.9276);-webkit-text-stroke:0.132px currentColor;">2D 표층 확산 모의 위주</span>
<span style="left:247.70px;top:455.72px;font-size:14.96px;font-weight:700;color:#c9d1dd;font-family:'Liberation Sans',sans-serif;-webkit-text-stroke:0.090px currentColor;">3D 수직 구조 반영 미흡</span>
<span style="left:67.96px;top:516.19px;font-size:17.60px;font-weight:400;color:#b3bccd;font-family:'Liberation Sans',sans-serif;transform:scaleX(0.8195);-webkit-text-stroke:0.141px currentColor;">기상·해양 결합 피드백 미적용</span>
<span style="left:286.56px;top:516.97px;font-size:16.68px;font-weight:700;color:#c9d1dd;font-family:'Liberation Sans',sans-serif;transform:scaleX(0.8629);-webkit-text-stroke:0.100px currentColor;">대규모 유출 시 정확도 저하</span>
<span style="left:67.94px;top:579.48px;font-size:16.68px;font-weight:400;color:#b3bccd;font-family:'Liberation Sans',sans-serif;transform:scaleX(0.8805);-webkit-text-stroke:0.133px currentColor;">조류 조화상수 분해능 한계</span>
<span style="left:269.12px;top:579.88px;font-size:15.97px;font-weight:700;color:#c9d1dd;font-family:'Liberation Sans',sans-serif;transform:scaleX(0.9073);-webkit-text-stroke:0.096px currentColor;">항만·연안 세부 예측 오차</span>
<span style="left:1983.27px;top:395.28px;font-size:20.48px;font-weight:700;color:#22c55e;font-family:'Liberation Sans',sans-serif;transform:scaleX(0.9390);-webkit-text-stroke:0.184px currentColor;">발전 방향</span>
<span style="left:1967.09px;top:455.72px;font-size:14.96px;font-weight:700;color:#ccd5e2;font-family:'Liberation Sans',sans-serif;transform:scaleX(1.0024);-webkit-text-stroke:0.090px currentColor;">ROMS 3D 해양모델 결합</span>
<span style="left:1966.94px;top:481.75px;font-size:12.76px;font-weight:400;color:#8d97a9;font-family:'Liberation Sans',sans-serif;transform:scaleX(1.0599);-webkit-text-stroke:0.102px currentColor;">광역</span>
<span style="left:2009.83px;top:480.44px;font-size:15.62px;font-weight:400;color:#8d97a9;font-family:'Liberation Sans',sans-serif;transform:scaleX(0.8995);-webkit-text-stroke:0.125px currentColor;">상세역 Nesting 200m급 고해상도 구현</span>
<span style="left:1967.69px;top:541.67px;font-size:16.15px;font-weight:700;color:#ccd5e2;font-family:'Liberation Sans',sans-serif;transform:scaleX(0.9666);-webkit-text-stroke:0.097px currentColor;">AI/ML 서로게이트 모델</span>
<span style="left:1967.05px;top:569.46px;font-size:14.36px;font-weight:400;color:#8d97a9;font-family:'Liberation Sans',sans-serif;transform:scaleX(0.9611);-webkit-text-stroke:0.115px currentColor;">수치모델 학습 기반 수초 내 근사 예측</span>
<span style="left:1967.41px;top:630.40px;font-size:16.81px;font-weight:700;color:#ccd5e2;font-family:'Liberation Sans',sans-serif;transform:scaleX(0.8660);-webkit-text-stroke:0.101px currentColor;">위성 SAR 실시간 동화</span>
<span style="left:1967.18px;top:657.64px;font-size:14.77px;font-weight:400;color:#8d97a9;font-family:'Liberation Sans',sans-serif;transform:scaleX(0.9032);-webkit-text-stroke:0.118px currentColor;">관측 유막 데이터 모델 보정 자동화</span>
<span style="left:86.00px;top:763.86px;font-size:18.26px;font-weight:700;color:#eef1f7;font-family:'Liberation Sans',sans-serif;transform:scaleX(1.0717);-webkit-text-stroke:0.110px currentColor;">WING 유출유 모델 고도화 로드맵</span>
<span style="left:484.59px;top:824.67px;font-size:13.88px;font-weight:700;color:#22c55e;font-family:'Liberation Sans',sans-serif;transform:scaleX(0.9570);-webkit-text-stroke:0.083px currentColor;">Phase 1 (완료)</span>
<span style="left:482.13px;top:851.71px;font-size:15.12px;font-weight:700;color:#f4f6fa;font-family:'Liberation Sans',sans-serif;transform:scaleX(1.0211);-webkit-text-stroke:0.091px currentColor;">2D 앙상블</span>
<span style="left:450.08px;top:881.40px;font-size:15.23px;font-weight:400;color:#9aa3b3;font-family:'Liberation Sans',sans-serif;transform:scaleX(0.9022);">KOSPS + POSEIDON</span>
<span style="left:466.25px;top:905.37px;font-size:15.54px;font-weight:400;color:#9aa3b3;font-family:'Liberation Sans',sans-serif;transform:scaleX(0.9460);-webkit-text-stroke:0.124px currentColor;">+ OpenDrift 3종</span>
<span style="left:466.65px;top:927.42px;font-size:12.46px;font-weight:400;color:#9aa3b3;font-family:'Liberation Sans',sans-serif;transform:scaleX(1.1125);-webkit-text-stroke:0.100px currentColor;">표층 확산 앙상블</span>
<span style="left:1409.15px;top:824.67px;font-size:13.88px;font-weight:700;color:#22b8d6;font-family:'Liberation Sans',sans-serif;transform:scaleX(0.9974);-webkit-text-stroke:0.083px currentColor;">Phase 2 (진행중)</span>
<span style="left:1411.08px;top:852.72px;font-size:14.96px;font-weight:700;color:#f4f6fa;font-family:'Liberation Sans',sans-serif;transform:scaleX(1.0031);-webkit-text-stroke:0.090px currentColor;">ROMS 결합</span>
<span style="left:1411.44px;top:881.46px;font-size:14.36px;font-weight:400;color:#9aa3b3;font-family:'Liberation Sans',sans-serif;transform:scaleX(0.9706);-webkit-text-stroke:0.115px currentColor;">3D 수직 구조</span>
<span style="left:1408.63px;top:902.36px;font-size:16.23px;font-weight:400;color:#9aa3b3;font-family:'Liberation Sans',sans-serif;transform:scaleX(0.8488);-webkit-text-stroke:0.130px currentColor;">고해상도 연안</span>
<span style="left:1406.82px;top:924.76px;font-size:16.23px;font-weight:400;color:#9aa3b3;font-family:'Liberation Sans',sans-serif;transform:scaleX(0.8620);-webkit-text-stroke:0.130px currentColor;">조류 정밀 반영</span>
<span style="left:2350.35px;top:824.67px;font-size:13.88px;font-weight:700;color:#a855f7;font-family:'Liberation Sans',sans-serif;transform:scaleX(1.0042);-webkit-text-stroke:0.083px currentColor;">Phase 3 (계획)</span>
<span style="left:2359.69px;top:852.72px;font-size:14.96px;font-weight:700;color:#f4f6fa;font-family:'Liberation Sans',sans-serif;transform:scaleX(1.0045);-webkit-text-stroke:0.090px currentColor;">AI 융합</span>
<span style="left:2338.66px;top:882.44px;font-size:14.52px;font-weight:400;color:#9aa3b3;font-family:'Liberation Sans',sans-serif;transform:scaleX(0.9371);-webkit-text-stroke:0.116px currentColor;">ML 서로게이트</span>
<span style="left:2340.58px;top:902.36px;font-size:16.23px;font-weight:400;color:#9aa3b3;font-family:'Liberation Sans',sans-serif;transform:scaleX(0.8307);-webkit-text-stroke:0.130px currentColor;">위성 SAR 동화</span>
<span style="left:2349.14px;top:924.76px;font-size:16.23px;font-weight:400;color:#9aa3b3;font-family:'Liberation Sans',sans-serif;transform:scaleX(0.8691);-webkit-text-stroke:0.130px currentColor;">실시간 보정</span>
<span style="left:3286.75px;top:823.20px;font-size:14.32px;font-weight:700;color:#f97316;font-family:'Liberation Sans',sans-serif;transform:scaleX(0.9885);-webkit-text-stroke:0.086px currentColor;">Phase 4 (목표)</span>
<span style="left:3288.29px;top:851.71px;font-size:15.12px;font-weight:700;color:#f4f6fa;font-family:'Liberation Sans',sans-serif;transform:scaleX(1.0099);-webkit-text-stroke:0.091px currentColor;">자동 대응</span>
<span style="left:3272.03px;top:882.69px;font-size:13.75px;font-weight:400;color:#9aa3b3;font-family:'Liberation Sans',sans-serif;transform:scaleX(0.9950);-webkit-text-stroke:0.110px currentColor;">사고감지</span>
<span style="left:3342.91px;top:881.46px;font-size:14.36px;font-weight:400;color:#9aa3b3;font-family:'Liberation Sans',sans-serif;transform:scaleX(0.9442);-webkit-text-stroke:0.115px currentColor;">예측</span>
<span style="left:3285.68px;top:904.67px;font-size:14.11px;font-weight:400;color:#9aa3b3;font-family:'Liberation Sans',sans-serif;transform:scaleX(0.9763);-webkit-text-stroke:0.113px currentColor;">방제자원 배치</span>
<span style="left:3276.98px;top:924.76px;font-size:16.23px;font-weight:400;color:#9aa3b3;font-family:'Liberation Sans',sans-serif;transform:scaleX(0.8353);-webkit-text-stroke:0.130px currentColor;">전 과정 자동화</span>
</body></html>
